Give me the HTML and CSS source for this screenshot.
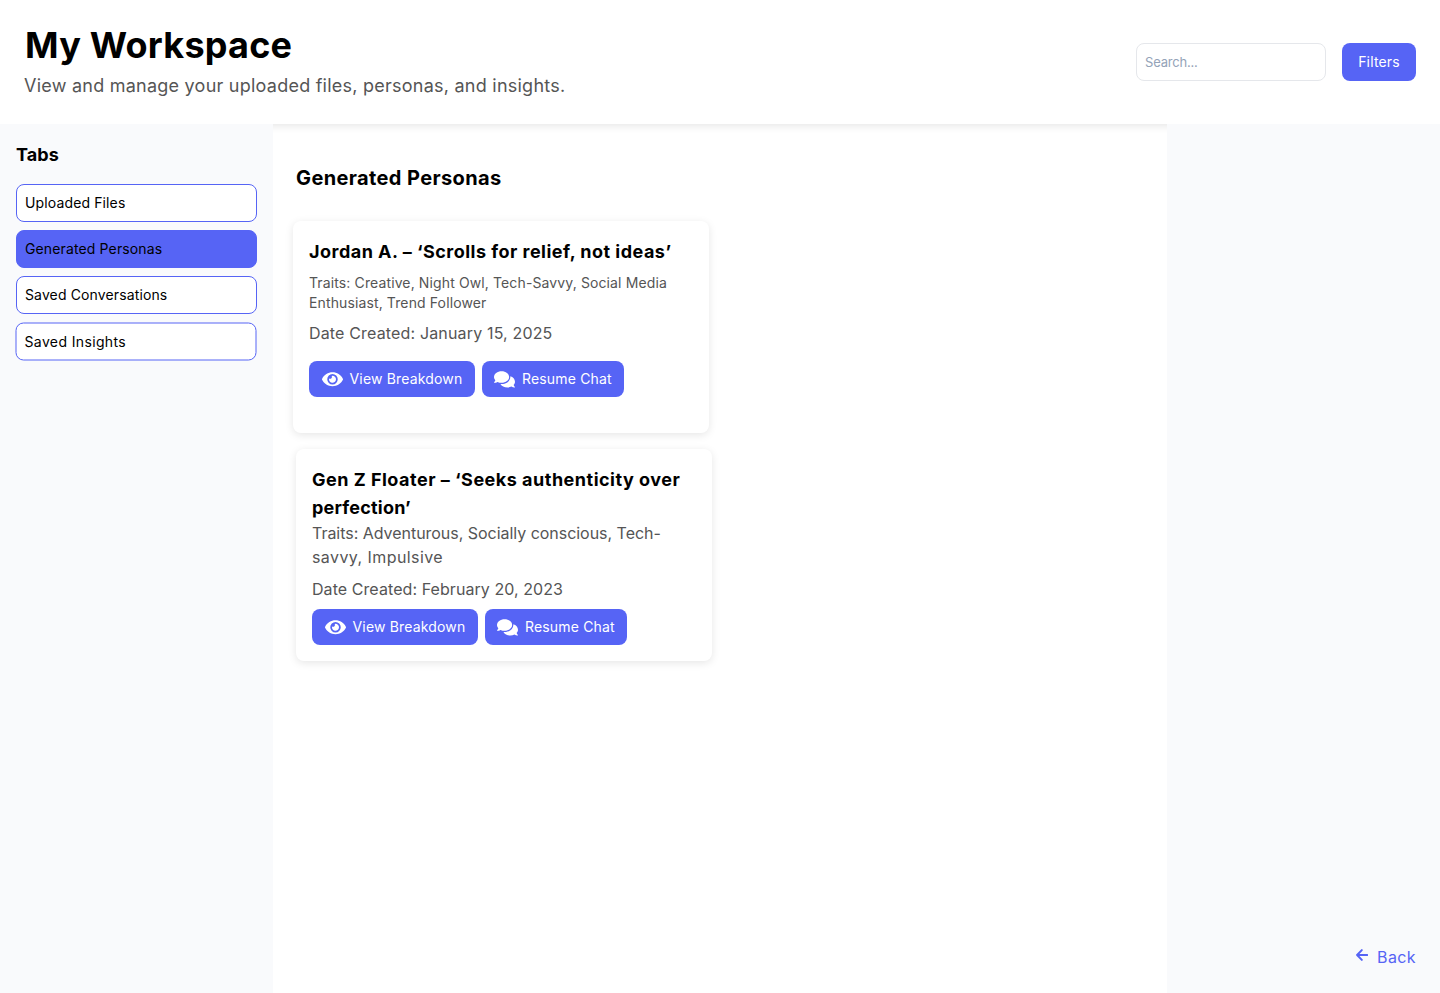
FILE: index.html
```html
<!DOCTYPE html>
<html lang="en">
<head>
<meta charset="utf-8">
<title>My Workspace</title>
<link rel="stylesheet" href="styles.css">
</head>
<body>
<svg class="sprite" aria-hidden="true">
  <symbol id="eye" viewBox="0 0 576 512"><path d="M572.52 241.4C518.29 135.59 410.93 64 288 64S57.68 135.64 3.48 241.41a32.35 32.35 0 0 0 0 29.19C57.71 376.41 165.07 448 288 448s230.32-71.64 284.52-177.41a32.35 32.35 0 0 0 0-29.19zM288 400a144 144 0 1 1 144-144 143.93 143.93 0 0 1-144 144zm0-240a95.31 95.31 0 0 0-25.31 3.79 47.85 47.85 0 0 1-66.9 66.9A95.78 95.78 0 1 0 288 160z"/></symbol>
  <symbol id="comments" viewBox="0 0 576 512"><path d="M416 192c0-88.4-93.1-160-208-160S0 103.6 0 192c0 34.3 14.1 65.9 38 92-13.4 30.2-35.5 54.2-35.8 54.5-2.2 2.3-2.8 5.7-1.5 8.7S4.8 352 8 352c36.6 0 66.9-12.3 88.7-25 32.2 15.7 70.3 25 111.3 25 114.9 0 208-71.6 208-160zm122 220c23.9-26 38-57.7 38-92 0-66.9-53.5-124.2-129.3-148.1.9 6.6 1.3 13.3 1.3 20.1 0 105.9-107.7 192-240 192-10.8 0-21.3-.8-31.7-1.9C207.8 439.6 281.8 480 368 480c41 0 79.1-9.2 111.3-25 21.8 12.7 52.1 25 88.7 25 3.2 0 6.1-1.9 7.3-4.8 1.3-2.9.7-6.3-1.5-8.7-.3-.2-22.4-24.2-35.8-54.5z"/></symbol>
</svg>
<header class="header">
  <div>
    <h1 class="title">My Workspace</h1>
    <p class="subtitle">View and manage your uploaded files, personas, and insights.</p>
  </div>
  <div class="tools">
    <input class="search" type="text" placeholder="Search...">
    <button class="filters">Filters</button>
  </div>
</header>
<div class="columns">
  <aside class="sidebar">
    <h2 class="side-title">Tabs</h2>
    <nav class="tabs">
      <a class="tab t-files">Uploaded Files</a>
      <a class="tab t-personas active">Generated Personas</a>
      <a class="tab t-convos">Saved Conversations</a>
      <a class="tab t-insights">Saved Insights</a>
    </nav>
  </aside>
  <main class="main">
    <h2 class="section-title">Generated Personas</h2>
    <article class="card shifted">
      <h3 class="card-title">Jordan A. – ‘Scrolls for relief, not ideas’</h3>
      <p class="traits small">Traits: Creative, Night Owl, Tech-Savvy, Social Media<br>Enthusiast, Trend Follower</p>
      <p class="date loose">Date Created: January 15, 2025</p>
      <div class="actions spaced">
        <button class="btn view"><svg class="icon"><use href="#eye"/></svg><span>View Breakdown</span></button>
        <button class="btn chat"><svg class="icon"><use href="#comments"/></svg><span>Resume Chat</span></button>
      </div>
    </article>
    <article class="card">
      <h3 class="card-title wide">Gen Z Floater – ‘Seeks authenticity over<br><span class="title-end">perfection’</span></h3>
      <p class="traits">Traits: Adventurous, Socially conscious, Tech-<br><span class="traits-end">savvy, Impulsive</span></p>
      <p class="date">Date Created: February 20, 2023</p>
      <div class="actions">
        <button class="btn view"><svg class="icon"><use href="#eye"/></svg><span>View Breakdown</span></button>
        <button class="btn chat"><svg class="icon"><use href="#comments"/></svg><span>Resume Chat</span></button>
      </div>
    </article>
  </main>
  <aside class="rail">
    <a class="back"><svg class="arrow" viewBox="0 0 12 12"><path d="M11.2 6H1.4M5.8 1.1L1.1 6l4.7 4.9"/></svg><span>Back</span></a>
  </aside>
</div>
</body>
</html>
```
FILE: styles.css
```css
* { box-sizing: border-box; }
body {
  margin: 0;
  height: 993px;
  display: flex;
  flex-direction: column;
  background: #fff;
  color: #000;
  font-family: Inter, "Open Sans", sans-serif;
  overflow: hidden;
}
h1, h2, h3, p { margin: 0; }
button { border: 0; font-family: inherit; }
.sprite { display: none; }
.header {
  height: 124px;
  flex: none;
  padding: 24px;
  display: flex;
  justify-content: space-between;
  align-items: center;
  background: #fff;
  box-shadow: 0 2px 8px rgba(0, 0, 0, .1);
}
.title { padding: 1px 0 0 1px; font-size: 36px; line-height: 40px; font-weight: 700; letter-spacing: 0.22px; white-space: nowrap; }
.subtitle { margin-top: 7px; font-size: 18px; line-height: 28px; color: #555; letter-spacing: 0.24px; white-space: nowrap; }
.tools { display: flex; gap: 16px; }
.search {
  width: 190px;
  height: 38px;
  padding: 0 8px;
  border: 1px solid #e5e7eb;
  border-radius: 8px;
  font: 13px Inter, sans-serif;
  letter-spacing: -0.2px;
}
.search::placeholder { color: #94a3b8; opacity: 1; }
.filters {
  width: 74px;
  height: 38px;
  padding: 0 0 2px;
  border-radius: 8px;
  background: #5664f5;
  color: #fff;
  font-size: 14px;
  letter-spacing: 0.15px;
}
.columns { flex: 1; display: grid; grid-template-columns: 273px 894px 273px; }
.sidebar { position: relative; background: #f9fafc; padding: 16px; }
.side-title { padding-top: 1px; height: 28px; font-size: 18px; line-height: 28px; font-weight: 700; letter-spacing: 0.1px; }
.tabs { margin-top: 16px; display: flex; flex-direction: column; gap: 8px; }
.tab {
  height: 38px;
  padding: 0 8px;
  border: 1px solid #5664f5;
  border-radius: 8px;
  background: #fff;
  font-size: 14px;
  line-height: 36px;
  letter-spacing: 0.13px;
}
.tab.active { background: #5664f5; }
.t-insights { transform: translate(-0.5px, 0.5px); letter-spacing: 0.37px; }
.main { padding: 40px 23px; }
.section-title { font-size: 20px; line-height: 28px; font-weight: 700; margin-bottom: 29px; letter-spacing: 0.38px; }
.card {
  width: 416px;
  height: 212px;
  margin-bottom: 16px;
  padding: 16px;
  border-radius: 8px;
  background: #fff;
  box-shadow: 0 2px 8px rgba(0, 0, 0, .1);
  white-space: nowrap;
}
.card.shifted { margin-left: -3px; }
.card-title { padding-top: 1px; margin-bottom: -1px; font-size: 18px; line-height: 28px; font-weight: 700; letter-spacing: 0.48px; }
.card-title.wide { letter-spacing: 0.5px; }
.title-end { letter-spacing: 0.2px; }
.traits { font-size: 16px; line-height: 24px; color: #555; letter-spacing: -0.03px; }
.traits-end { letter-spacing: 0.42px; }
.traits.small { padding-top: 8px; font-size: 14px; line-height: 20px; letter-spacing: 0.12px; }
.date { margin-top: 8px; font-size: 16px; line-height: 24px; color: #555; letter-spacing: 0.07px; }
.date.loose { letter-spacing: 0.16px; }
.actions { margin-top: 8px; display: flex; gap: 7px; }
.actions.spaced { margin-top: 16px; }
.btn {
  height: 36px;
  padding: 0 12px 1px;
  display: flex;
  align-items: center;
  gap: 7px;
  border-radius: 8px;
  background: #5664f5;
  color: #fff;
  font-size: 14px;
  letter-spacing: 0.17px;
}
.btn.view { width: 166px; padding-left: 12.5px; }
.btn.chat { width: 142px; }
.icon { width: 21px; height: 18.67px; margin-top: 1px; flex: none; fill: #fff; }
.rail { position: relative; background: #f9fafc; display: flex; align-items: flex-end; justify-content: flex-end; padding: 24px; }
.back { display: flex; align-items: center; gap: 9px; color: #5664f5; font-size: 16px; line-height: 24px; letter-spacing: 0.4px; }
.arrow { width: 12px; height: 12px; margin-bottom: 4px; fill: none; stroke: #5664f5; stroke-width: 2; stroke-linecap: round; stroke-linejoin: round; }
```
